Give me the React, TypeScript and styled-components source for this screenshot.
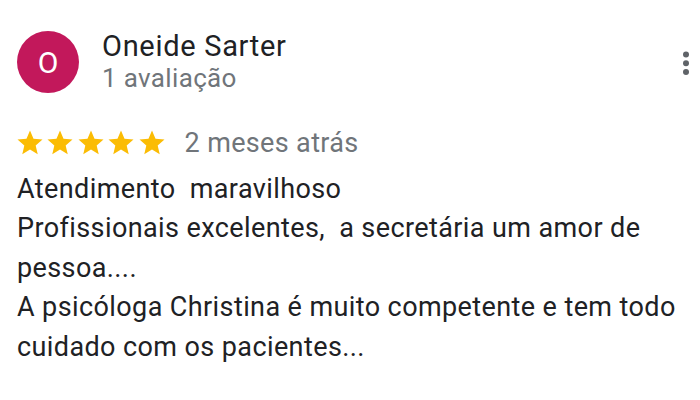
import React from "react";
import styled, { createGlobalStyle } from "styled-components";

const GlobalStyle = createGlobalStyle`
    html, body {
        margin: 0;
        padding: 0;
        background: #ffffff;
    }
    body {
        font-family: Roboto, "Liberation Sans", Arial, sans-serif;
    }
`;

const Card = styled.div`
    width: 700px;
    height: 400px;
    box-sizing: border-box;
    padding: 30px 10px 0 17px;
    background: #ffffff;
    color: #202124;
    font-family: Roboto, "Liberation Sans", Arial, sans-serif;
`;

const Header = styled.div`
    display: flex;
    align-items: flex-start;
    gap: 23px;
`;

const Avatar = styled.div<{ $bg: string }>`
    width: 62px;
    height: 62px;
    margin-top: 1px;
    flex-shrink: 0;
    border-radius: 50%;
    background: ${(p) => p.$bg};
    color: #ffffff;
    font-size: 30px;
    display: flex;
    align-items: center;
    justify-content: center;
`;

const Author = styled.div`
    flex: 1;
    display: flex;
    flex-direction: column;
`;

const Name = styled.div`
    font-size: 29px;
    line-height: 32px;
    letter-spacing: 0.7px;
    color: #202124;
`;

const Muted = styled.div<{ $size?: number }>`
    font-size: ${(p) => p.$size ?? 27}px;
    line-height: 32px;
    letter-spacing: 0.35px;
    color: #70757a;
`;

const MenuButton = styled.div`
    margin-top: 21px;
    display: flex;
`;

const RatingRow = styled.div`
    display: flex;
    align-items: center;
    margin-top: 33px;
    height: 32px;
`;

const Stars = styled.div`
    display: flex;
    gap: 0.4px;
    margin-left: -2px;
    margin-right: 18px;
`;

const Body = styled.div`
    margin-top: 11px;
    font-size: 27px;
    line-height: 39.4px;
    letter-spacing: 0.4px;
    color: #202124;
    white-space: pre-wrap;
    width: 672px;
`;

const Star = ({ color }: { color: string }) => (
    <svg width="30" height="30" viewBox="0 0 24 24">
        <path
            fill={color}
            d="M12 17.27L18.18 21l-1.64-7.03L22 9.24l-7.19-.61L12 2 9.19 8.63 2 9.24l5.46 4.73L5.82 21z"
        />
    </svg>
);

const MoreIcon = () => (
    <svg width="8" height="26" viewBox="0 0 8 26">
        <circle cx="4" cy="3.5" r="3" fill="#5f6368" />
        <circle cx="4" cy="12.3" r="3" fill="#5f6368" />
        <circle cx="4" cy="21.1" r="3" fill="#5f6368" />
    </svg>
);

const review = {
    author: "Oneide Sarter",
    count: "1 avaliação",
    rating: 5,
    when: "2 meses atrás",
    text:
        "Atendimento  maravilhoso\nProfissionais excelentes,  a secretária um amor de pessoa....\nA psicóloga Christina é muito competente e tem todo cuidado com os pacientes...",
};

export default function App() {
    return (
        <>
            <GlobalStyle />
            <Card>
                <Header>
                    <Avatar $bg="#c2185b">{review.author[0]}</Avatar>
                    <Author>
                        <Name>{review.author}</Name>
                        <Muted $size={26}>{review.count}</Muted>
                    </Author>
                    <MenuButton>
                        <MoreIcon />
                    </MenuButton>
                </Header>
                <RatingRow>
                    <Stars>
                        {Array.from({ length: review.rating }).map((_, i) => (
                            <Star key={i} color="#fbbc04" />
                        ))}
                    </Stars>
                    <Muted>{review.when}</Muted>
                </RatingRow>
                <Body>{review.text}</Body>
            </Card>
        </>
    );
}
